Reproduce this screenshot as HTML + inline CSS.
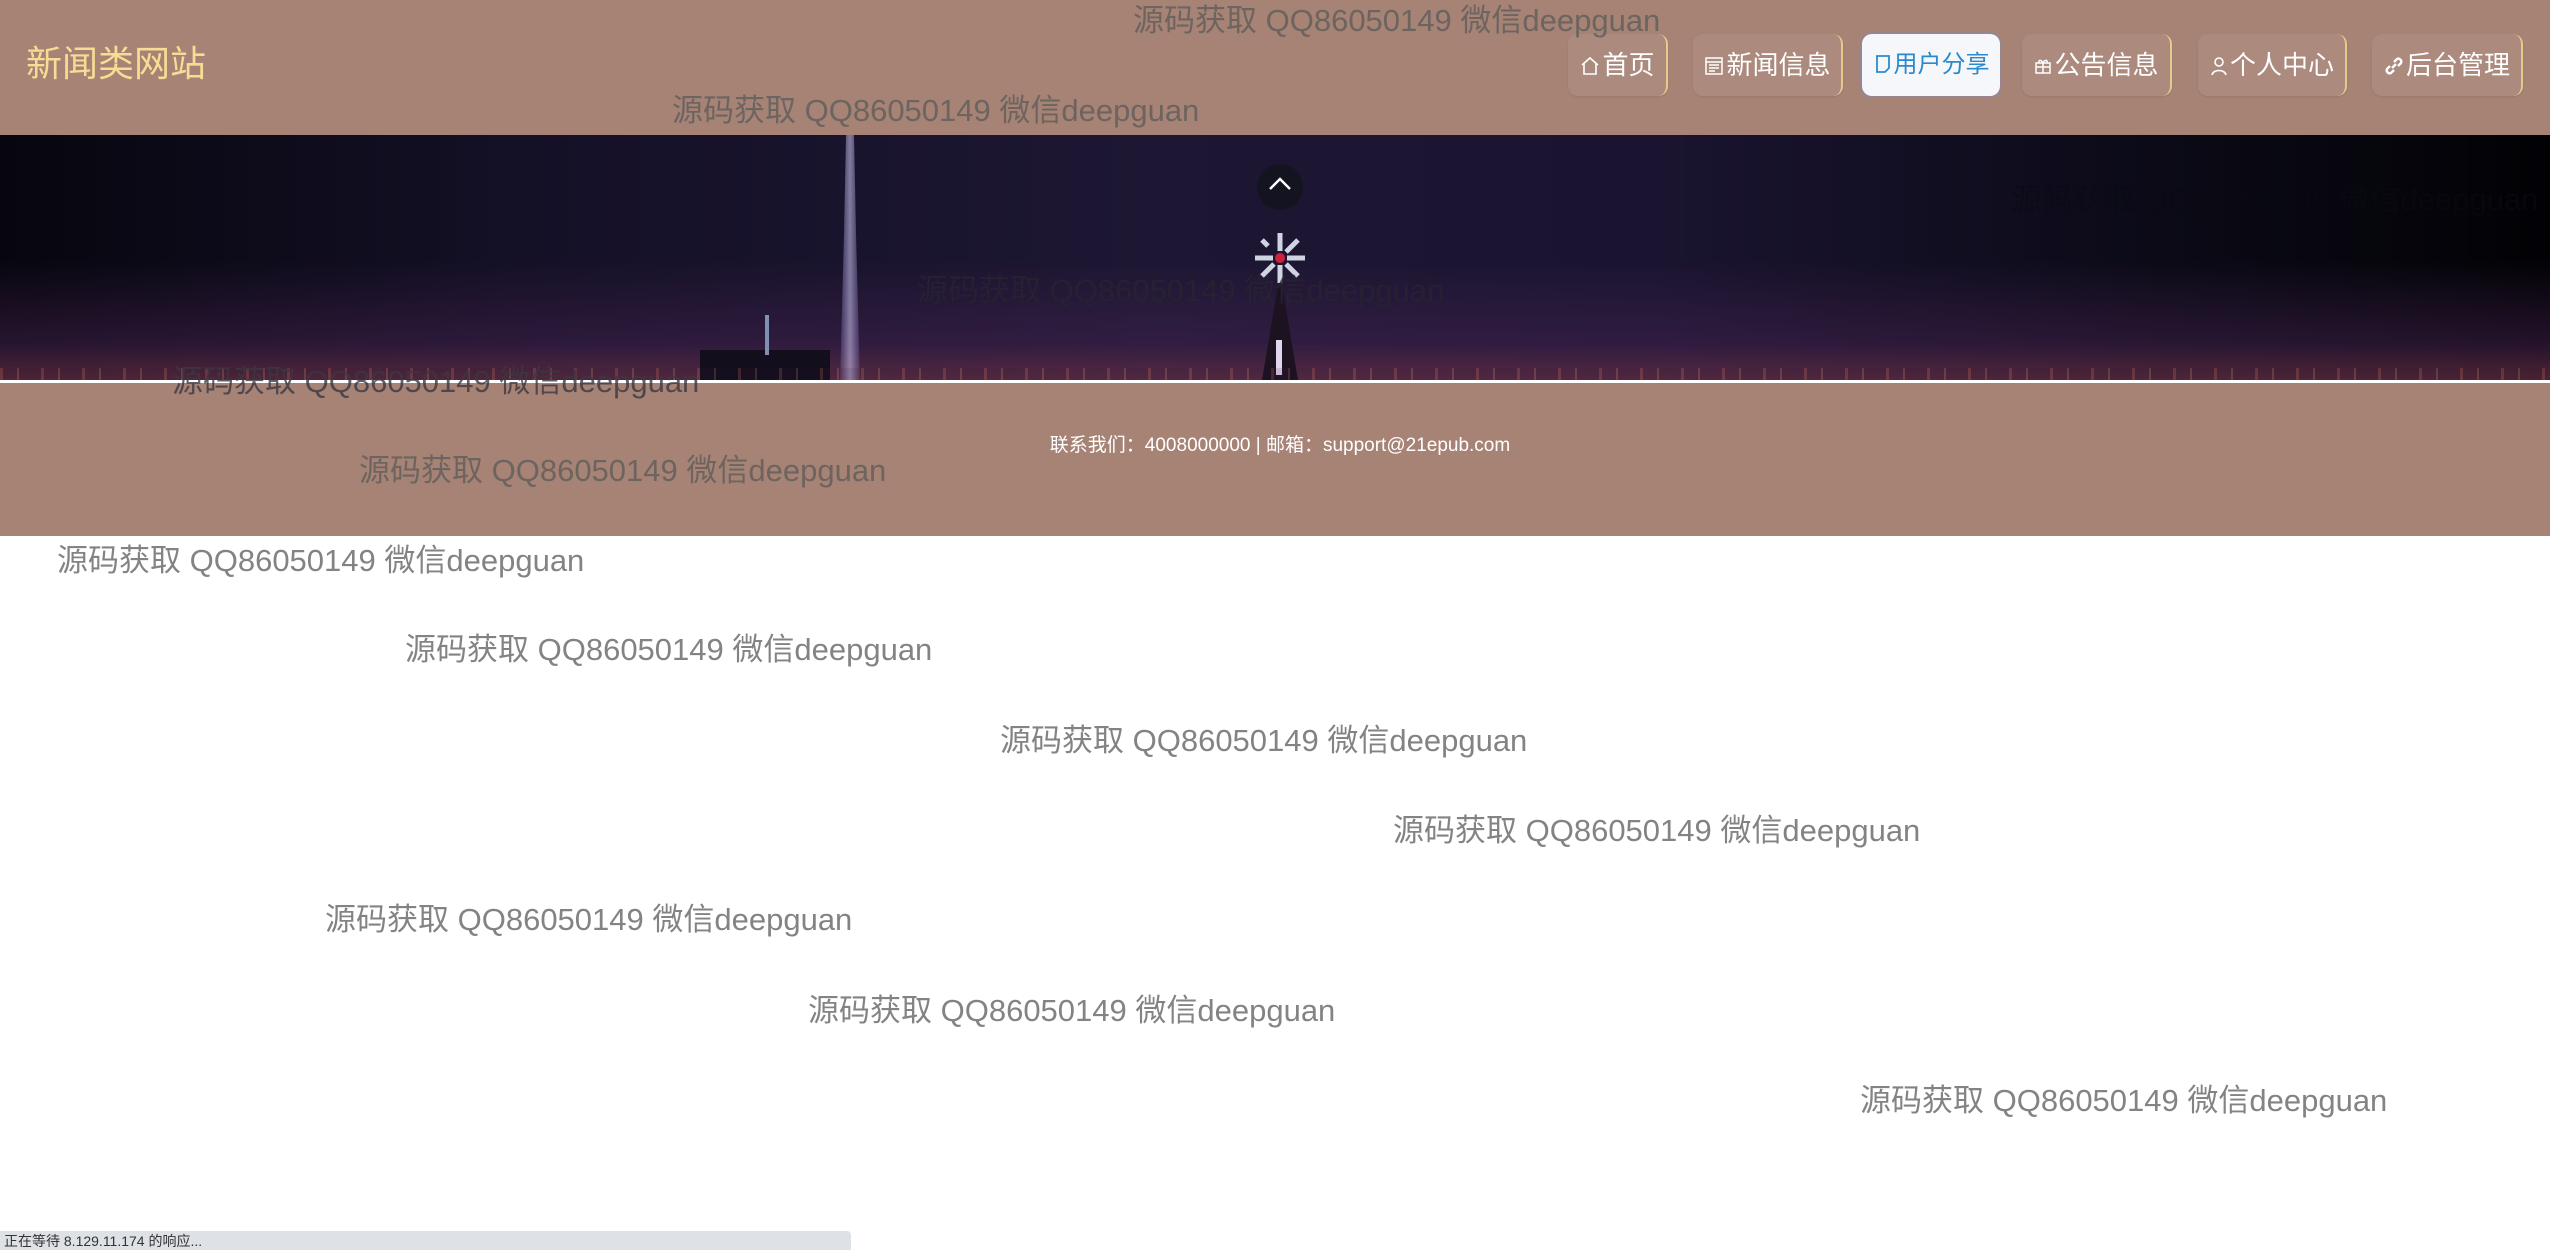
<!DOCTYPE html>
<html><head><meta charset="utf-8">
<style>
*{margin:0;padding:0;box-sizing:border-box}
html,body{width:2550px;height:1250px;overflow:hidden;background:#fff;position:relative;font-family:"Liberation Sans","Noto Sans CJK SC",sans-serif}
.header{position:absolute;left:0;top:0;width:2550px;height:135px;background:#a68375}
.logo{position:absolute;left:26px;top:40px;font-size:36px;color:#f6dc95;line-height:48px}
.btn{position:absolute;top:34px;height:62px;border-radius:10px;background:rgba(255,255,255,0.07);border-right:2px solid #e8c98a;color:#fff;font-size:26px;line-height:62px;text-align:center;box-shadow:0 1px 2px rgba(0,0,0,0.08)}
.btn.active{background:#f5f7fa;color:#2a8ad0;border-right:none;box-shadow:0 0 0 2px rgba(120,140,200,0.35)}
.btn svg{vertical-align:-3px;margin-right:1px}
.banner{position:absolute;left:0;top:135px;width:2550px;height:245px;overflow:hidden;
background:linear-gradient(90deg,#07060e 0%,#141026 20%,#1d1733 45%,#1a1430 65%,#0b0a16 85%,#020205 100%)}
.banner .glow{position:absolute;left:0;right:0;bottom:0;height:120px;background:linear-gradient(180deg,rgba(60,30,80,0) 0%,rgba(70,35,80,0.5) 70%,rgba(110,50,70,0.7) 100%)}
.lights{position:absolute;left:0;right:0;bottom:0;height:12px;background:repeating-linear-gradient(90deg,rgba(200,110,90,.25) 0 3px,rgba(60,30,60,.15) 3px 17px,rgba(230,160,120,.2) 17px 19px,rgba(40,20,50,.1) 19px 41px)}
.line{position:absolute;left:0;top:380px;width:2550px;height:3px;background:#fff}
.footer{position:absolute;left:0;top:383px;width:2550px;height:153px;background:#a68375}
.footer p{position:absolute;left:0;width:2560px;top:51px;text-align:center;color:#fff;font-size:19px;line-height:24px}
.wm{position:absolute;font-size:31px;color:rgba(90,90,90,0.75);white-space:nowrap;line-height:40px;font-family:"Liberation Sans","Noto Sans CJK SC",sans-serif}
.status{position:absolute;left:0;top:1231px;width:851px;height:19px;background:#dee1e6;border-top-right-radius:4px;font-size:14px;line-height:20px;color:#333;padding-left:4px}
</style></head><body>
<div class="header">
  <div class="logo">新闻类网站</div>
  <div class="btn" style="left:1568px;width:100px"><svg width="22" height="22" viewBox="0 0 22 22" fill="none" stroke="#fff" stroke-width="1.6"><path d="M3 10 L11 3 L19 10 M5 8 V19 H17 V8"/></svg>首页</div>
  <div class="btn" style="left:1693px;width:150px"><svg width="22" height="22" viewBox="0 0 22 22" fill="none" stroke="#fff" stroke-width="1.5"><rect x="3" y="3" width="16" height="16"/><path d="M3 7H19M6 10H16M6 13H16M6 16H12"/></svg>新闻信息</div>
  <div class="btn active" style="left:1862px;width:138px;font-size:24px"><svg width="20" height="22" viewBox="0 0 20 22" fill="none" stroke="#2a8ad0" stroke-width="1.8"><path d="M4 3H16V15L12 19H4Z"/></svg>用户分享</div>
  <div class="btn" style="left:2022px;width:150px"><svg width="20" height="22" viewBox="0 0 20 22" fill="none" stroke="#fff" stroke-width="1.5"><rect x="3" y="8" width="14" height="10"/><path d="M10 8V18M3 12H17M10 8C8 4 5 5 6 8M10 8C12 4 15 5 14 8"/></svg>公告信息</div>
  <div class="btn" style="left:2198px;width:149px"><svg width="20" height="22" viewBox="0 0 20 22" fill="none" stroke="#fff" stroke-width="1.6"><circle cx="10" cy="7" r="4"/><path d="M3 20C4 14 16 14 17 20"/></svg>个人中心</div>
  <div class="btn" style="left:2372px;width:151px"><svg width="22" height="22" viewBox="0 0 22 22" fill="none" stroke="#fff" stroke-width="2.4"><path d="M9 13L13 9M7 11L4 14A3 3 0 0 0 8 18L11 15M11 7L14 4A3 3 0 0 1 18 8L15 11"/></svg>后台管理</div>
</div>
<div class="banner">
  <div class="glow"></div>
  <div style="position:absolute;left:840px;top:0;width:20px;height:245px;background:linear-gradient(90deg,rgba(100,90,150,.3),rgba(200,190,235,.6),rgba(100,90,150,.3));clip-path:polygon(30% 0,70% 0,80% 40%,100% 100%,0 100%,20% 40%)"></div>
  <div style="position:absolute;left:700px;top:215px;width:130px;height:30px;background:#120e1c"></div>
  <div style="position:absolute;left:765px;top:180px;width:4px;height:40px;background:#8090b0"></div>
  <div style="position:absolute;left:1262px;top:150px;width:36px;height:95px;background:#1c1220;clip-path:polygon(45% 0,55% 0,100% 100%,0 100%)"></div>
  <div style="position:absolute;left:1276px;top:205px;width:6px;height:35px;background:#e0d6ee"></div>
  <div class="lights"></div>
  <div style="position:absolute;left:1257px;top:29px;width:46px;height:46px;border-radius:50%;background:#141320"></div>
  <svg style="position:absolute;left:1264px;top:38px" width="32" height="22" viewBox="0 0 32 22"><path d="M6 16L16 6L26 16" fill="none" stroke="#fff" stroke-width="2.4"/></svg>
  <svg style="position:absolute;left:1253px;top:96px" width="54" height="54" viewBox="0 0 54 54" stroke="#d0d4e0" stroke-width="5"><path d="M27 2V20M27 34V52M2 27H20M34 27H52M45 9L33 21M21 33L9 45M9 9L15 15M33 33L45 45"/><circle cx="27" cy="27" r="5" fill="#d0203a" stroke="none"/></svg>
</div>
<div class="line"></div>
<div class="footer"><p>联系我们：4008000000 | 邮箱：support@21epub.com</p></div>

<div class="wm" style="left:1133px;top:1px">源码获取 QQ86050149 微信deepguan</div>
<div class="wm" style="left:672px;top:91px">源码获取 QQ86050149 微信deepguan</div>
<div class="wm" style="left:2011px;top:180px;color:rgba(10,10,20,0.6)">源码获取 QQ86050149 微信deepguan</div>
<div class="wm" style="left:917px;top:271px;color:rgba(40,35,50,0.8)">源码获取 QQ86050149 微信deepguan</div>
<div class="wm" style="left:172px;top:362px;color:rgba(60,55,65,0.8)">源码获取 QQ86050149 微信deepguan</div>
<div class="wm" style="left:359px;top:451px">源码获取 QQ86050149 微信deepguan</div>
<div class="wm" style="left:57px;top:541px">源码获取 QQ86050149 微信deepguan</div>
<div class="wm" style="left:405px;top:630px">源码获取 QQ86050149 微信deepguan</div>
<div class="wm" style="left:1000px;top:721px">源码获取 QQ86050149 微信deepguan</div>
<div class="wm" style="left:1393px;top:811px">源码获取 QQ86050149 微信deepguan</div>
<div class="wm" style="left:325px;top:900px">源码获取 QQ86050149 微信deepguan</div>
<div class="wm" style="left:808px;top:991px">源码获取 QQ86050149 微信deepguan</div>
<div class="wm" style="left:1860px;top:1081px">源码获取 QQ86050149 微信deepguan</div>

<div class="status">正在等待 8.129.11.174 的响应...</div>
</body></html>
